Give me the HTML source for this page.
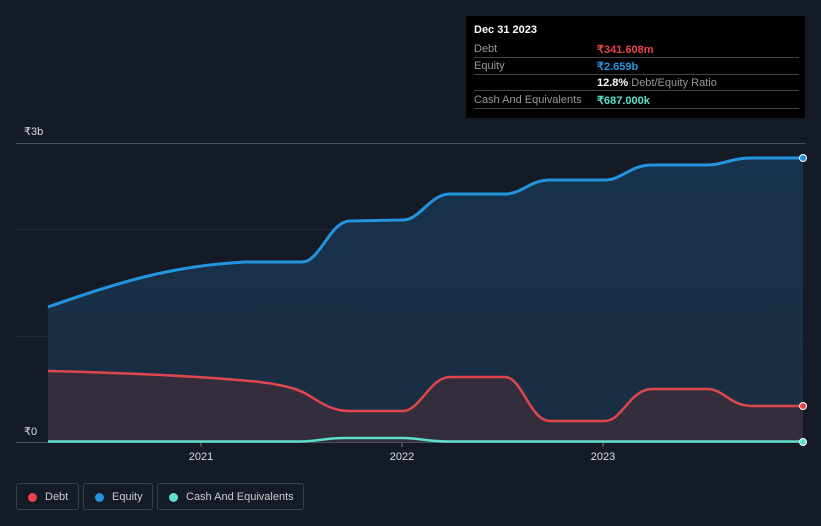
<!DOCTYPE html>
<html><head><meta charset="utf-8"><style>
body{margin:0;width:821px;height:526px;background:#151b26;font-family:"Liberation Sans",sans-serif;overflow:hidden;position:relative}
.tt{position:absolute;left:466px;top:16px;width:339px;height:102px;background:#000;color:#fff;font-size:11px}
.tt .r{position:absolute;left:8px;right:6px;height:17px;border-bottom:1px solid #444;}
.tt .l{position:absolute;left:0;top:3px;color:#999}
.tt .v{position:absolute;left:123px;top:3px;font-weight:bold}
.leg{position:absolute;top:483px;height:27px;border:1px solid #3a404b;border-radius:3px;color:#ccc;font-size:11px;line-height:26px;box-sizing:border-box}
.leg i{position:absolute;left:11px;top:9px;width:9px;height:9px;border-radius:50%}
.leg span{position:absolute;left:28px}
</style></head><body>
<svg width="821" height="526" style="position:absolute;left:0;top:0">
<defs>
<linearGradient id="g1" x1="0" y1="0" x2="0" y2="1"><stop offset="0" stop-color="#17324c"/><stop offset="1" stop-color="#1a2d42"/></linearGradient>
</defs>
<line x1="16" y1="143.5" x2="805" y2="143.5" stroke="#4a4f58"/>
<line x1="16" y1="229.5" x2="805" y2="229.5" stroke="#262c36"/>
<line x1="16" y1="336.5" x2="805" y2="336.5" stroke="#262c36"/>
<path d="M48,307 C120,282 170,266 245,262 L302,262 C320,262 330,221 350,221 L403,220 C420,220 430,194 450,194 L505,194 C522,194 530,180 550,180 L605,180 C622,180 630,165 652,165 L707,165 C724,165 730,158 752,158 L803,158 L803,442 L48,442Z" fill="url(#g1)"/>
<path d="M48,371 C130,373 200,376 260,382 C290,386 300,390 310,396 C325,406 335,411 350,411 L403,411 C420,411 430,377 450,377 L505,377 C522,377 530,421 550,421 L605,421 C622,421 630,389 652,389 L707,389 C724,389 730,406 752,406 L803,406 L803,442 L48,442Z" fill="#342d3c"/>
<line x1="16" y1="442.5" x2="805" y2="442.5" stroke="#4a4f58"/>
<path d="M48,307 C120,282 170,266 245,262 L302,262 C320,262 330,221 350,221 L403,220 C420,220 430,194 450,194 L505,194 C522,194 530,180 550,180 L605,180 C622,180 630,165 652,165 L707,165 C724,165 730,158 752,158 L803,158" fill="none" stroke="#2394df" stroke-width="3"/>
<path d="M48,371 C130,373 200,376 260,382 C290,386 300,390 310,396 C325,406 335,411 350,411 L403,411 C420,411 430,377 450,377 L505,377 C522,377 530,421 550,421 L605,421 C622,421 630,389 652,389 L707,389 C724,389 730,406 752,406 L803,406" fill="none" stroke="#e0464e" stroke-width="2.5"/>
<path d="M48,441.5 L300,441.5 C320,441 325,438 345,438 L403,438 C420,438 425,441.5 450,441.5 L803,441.5" fill="none" stroke="#5fe0cc" stroke-width="2.5"/>
<circle cx="803" cy="158" r="3.5" fill="#2394df" stroke="#fff" stroke-width="1"/>
<circle cx="803" cy="406" r="3.5" fill="#e0464e" stroke="#fff" stroke-width="1"/>
<circle cx="803" cy="442" r="3.5" fill="#5fe0cc" stroke="#fff" stroke-width="1"/>
<line x1="201" y1="443" x2="201" y2="447" stroke="#777"/>
<line x1="402" y1="443" x2="402" y2="447" stroke="#777"/>
<line x1="603" y1="443" x2="603" y2="447" stroke="#777"/>
<g fill="#ddd" font-size="11" font-family="Liberation Sans,sans-serif">
<text x="24" y="135">₹3b</text>
<text x="24" y="435">₹0</text>
<text x="201" y="460" text-anchor="middle">2021</text>
<text x="402" y="460" text-anchor="middle">2022</text>
<text x="603" y="460" text-anchor="middle">2023</text>
</g>
</svg>
<div class="tt">
<div style="position:absolute;left:8px;top:8px;font-size:11px;font-weight:bold">Dec 31 2023</div>
<div class="r" style="top:24px"><span class="l">Debt</span><span class="v" style="color:#e8434b">₹341.608m</span></div>
<div class="r" style="top:41px"><span class="l">Equity</span><span class="v" style="color:#2a95e0">₹2.659b</span></div>
<div class="r" style="top:58px;border:none"><span class="v" style="color:#fff">12.8% <span style="color:#999;font-weight:normal">Debt/Equity Ratio</span></span></div>
<div class="r" style="top:75px;border-top:1px solid #444;top:74px"><span class="l">Cash And Equivalents</span><span class="v" style="color:#5fe0cc">₹687.000k</span></div>
</div>
<div class="leg" style="left:16px;width:63px"><i style="background:#e8434b"></i><span>Debt</span></div>
<div class="leg" style="left:83px;width:70px"><i style="background:#2394df"></i><span>Equity</span></div>
<div class="leg" style="left:157px;width:147px"><i style="background:#5fe0cc"></i><span>Cash And Equivalents</span></div>
</body></html>
